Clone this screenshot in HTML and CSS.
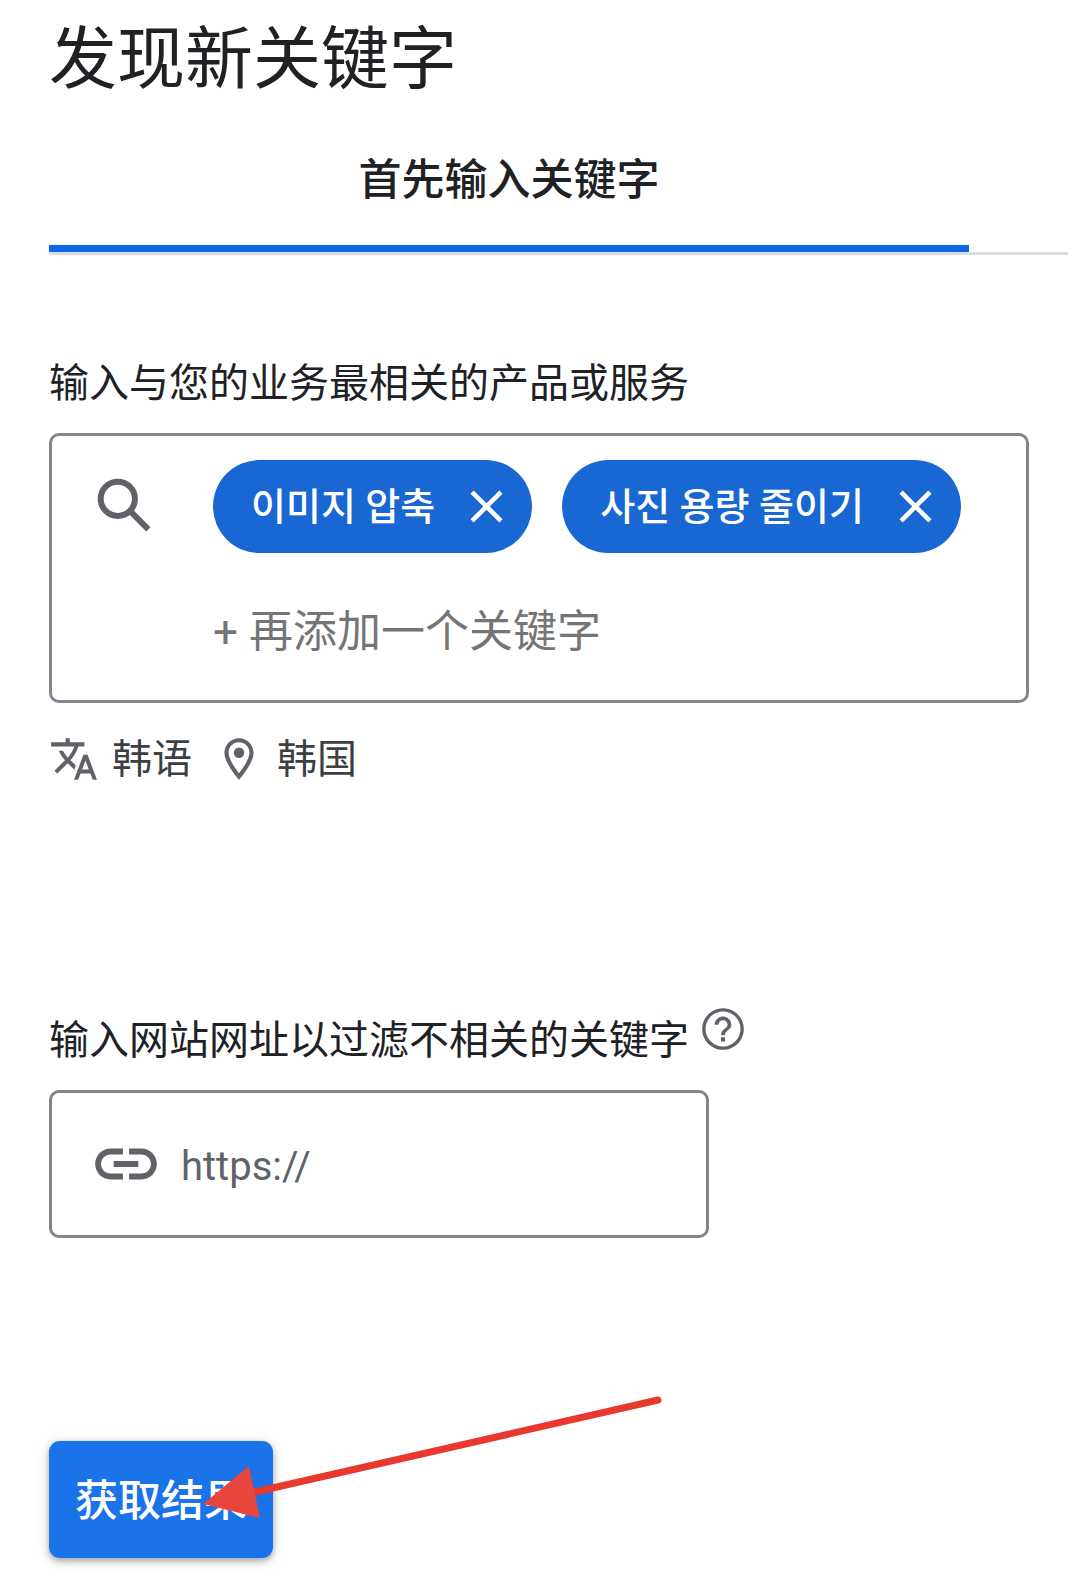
FILE: index.html
```html
<!DOCTYPE html>
<html lang="zh-CN">
<head>
  <meta charset="utf-8">
  <meta name="viewport" content="width=device-width, initial-scale=1">
  <title>发现新关键字</title>
  <link rel="stylesheet" href="styles.css">
</head>
<body>
  <main class="planner">
    <h1 class="title">发现新关键字</h1>

    <div class="tabs" role="tablist">
      <button class="tab" type="button" role="tab" aria-selected="true">首先输入关键字</button>
    </div>

    <form class="form">
      <label class="label" for="keyword">输入与您的业务最相关的产品或服务</label>
      <div class="keywords">
        <svg class="icon-search" viewBox="0 0 24 24" aria-hidden="true"><circle cx="9.6" cy="9.6" r="5.7"/><path d="M13.7 13.7L19.8 19.8"/></svg>
        <div class="entries">
          <div class="chips">
            <span class="chip" lang="ko"><span class="chip-text">이미지 압축</span>
              <button class="remove" type="button" aria-label="移除"><svg viewBox="0 0 24 24" aria-hidden="true"><path d="M19 6.41L17.59 5 12 10.59 6.41 5 5 6.41 10.59 12 5 17.59 6.41 19 12 13.41 17.59 19 19 17.59 13.41 12z"/></svg></button>
            </span>
            <span class="chip" lang="ko"><span class="chip-text">사진 용량 줄이기</span>
              <button class="remove" type="button" aria-label="移除"><svg viewBox="0 0 24 24" aria-hidden="true"><path d="M19 6.41L17.59 5 12 10.59 6.41 5 5 6.41 10.59 12 5 17.59 6.41 19 12 13.41 17.59 19 19 17.59 13.41 12z"/></svg></button>
            </span>
          </div>
          <input class="keyword-input" id="keyword" type="text" placeholder="+ 再添加一个关键字">
        </div>
      </div>

      <div class="targets">
        <span class="target">
          <svg class="icon" viewBox="0 0 24 24" aria-hidden="true"><path d="M12.87 15.07l-2.54-2.51.03-.03c1.74-1.94 2.98-4.17 3.71-6.53H17V4h-7V2H8v2H1v1.99h11.17C11.5 7.92 10.44 9.75 9 11.35 8.07 10.32 7.3 9.19 6.69 8h-2c.73 1.63 1.73 3.17 2.98 4.56l-5.09 5.02L4 19l5-5 3.11 3.11.76-2.04zM18.5 10h-2L12 22h2l1.12-3h4.75L21 22h2l-4.5-12zm-2.62 7l1.62-4.33L19.12 17h-3.24z"/></svg>
          韩语
        </span>
        <span class="target">
          <svg class="icon" viewBox="0 0 24 24" aria-hidden="true"><path d="M12 2C8.13 2 5 5.13 5 9c0 5.25 7 13 7 13s7-7.75 7-13c0-3.87-3.13-7-7-7zM7 9c0-2.76 2.24-5 5-5s5 2.24 5 5c0 2.88-2.88 7.19-5 9.88C9.92 16.21 7 11.85 7 9z"/><circle cx="12" cy="9" r="2.5"/></svg>
          韩国
        </span>
      </div>

      <div class="site-heading">
        <label class="label" for="site">输入网站网址以过滤不相关的关键字</label>
        <button class="help" type="button" aria-label="帮助"><svg class="icon" viewBox="0 0 24 24" aria-hidden="true"><path d="M11 18h2v-2h-2v2zm1-16C6.48 2 2 6.48 2 12s4.48 10 10 10 10-4.48 10-10S17.52 2 12 2zm0 18.4c-4.64 0-8.4-3.76-8.4-8.4S7.36 3.6 12 3.6s8.4 3.76 8.4 8.4-3.76 8.4-8.4 8.4zM12 6c-2.21 0-4 1.79-4 4h1.8c0-1.2 1-2.2 2.2-2.2s2.2 1 2.2 2.2c0 2-3.1 1.75-3.1 5h1.8c0-2.25 3.1-2.5 3.1-5 0-2.21-1.79-4-4-4z"/></svg></button>
      </div>
      <div class="site">
        <svg class="icon-link" viewBox="0 0 24 24" aria-hidden="true"><path d="M3.9 12c0-1.71 1.39-3.1 3.1-3.1h4V7H7c-2.76 0-5 2.24-5 5s2.24 5 5 5h4v-1.9H7c-1.71 0-3.1-1.39-3.1-3.1zM8 13h8v-2H8v2zm9-6h-4v1.9h4c1.71 0 3.1 1.39 3.1 3.1s-1.39 3.1-3.1 3.1h-4V17h4c2.76 0 5-2.24 5-5s-2.24-5-5-5z"/></svg>
        <input class="site-input" id="site" type="text" placeholder="https://">
      </div>

      <div class="actions">
        <button class="submit" type="submit">获取结果</button>
        <svg class="arrow" viewBox="0 0 466 128" aria-hidden="true"><path class="arrow-shaft" d="M54 98L457 6"/><path class="arrow-head" d="M2 110L48 72L59 124Z"/></svg>
      </div>
    </form>
  </main>
</body>
</html>
```
FILE: styles.css
```css
* {
  box-sizing: border-box;
}

body {
  margin: 0;
  background: #fff;
  color: #202124;
  font-family: Roboto, "Noto Sans CJK SC", sans-serif;
}

button,
input {
  margin: 0;
  padding: 0;
  border: 0;
  background: none;
  color: inherit;
  font: inherit;
}

svg {
  display: block;
  flex: none;
  fill: #5f6368;
}

.planner {
  padding: 20px 12px 16px 49px;
}

.title {
  margin: 0;
  font-size: 68px;
  font-weight: 400;
  line-height: 80px;
}

.tabs {
  display: flex;
  margin-top: 28px;
  padding-right: 99px;
  border-bottom: 3px solid #dadce0;
}

.tab {
  flex: 1;
  padding: 27px 0 40px;
  border-bottom: 7px solid #0b66e8;
  font-size: 43px;
  font-weight: 500;
  line-height: 50px;
}

.form {
  margin: 105px 39px 0 0;
}

.label {
  display: block;
  font-size: 40px;
  line-height: 48px;
}

.keywords {
  display: flex;
  gap: 52px;
  margin-top: 25px;
  padding: 24px 0 38px 37px;
  border: 3px solid #80868b;
  border-radius: 10px;
}

.icon-search {
  width: 72px;
  height: 72px;
  margin-top: 10px;
  fill: none;
  stroke: #5f6368;
  stroke-width: 2;
}

.entries {
  flex: 1;
  min-width: 0;
}

.chips {
  display: flex;
  flex-wrap: wrap;
  gap: 30px;
}

.chip {
  display: flex;
  align-items: center;
  gap: 24px;
  height: 93px;
  padding: 0 18px 0 38px;
  border-radius: 47px;
  background: #1967d2;
  color: #fff;
  font-family: Roboto, "Noto Sans CJK KR", sans-serif;
  font-size: 38px;
  font-weight: 500;
  white-space: nowrap;
}

.chip-text {
  padding-bottom: 6px;
}

.remove svg {
  width: 55px;
  height: 55px;
  fill: #fff;
}

.keyword-input {
  display: block;
  width: 100%;
  height: 60px;
  margin-top: 49px;
  font-size: 44px;
}

.keyword-input::placeholder {
  color: #757575;
  opacity: 1;
}

.targets {
  display: flex;
  gap: 22px;
  margin-top: 31px;
}

.target {
  display: flex;
  gap: 13px;
  color: #3c4043;
  font-size: 40px;
  line-height: 52px;
}

.icon {
  width: 50px;
  height: 50px;
}

.site-heading {
  display: flex;
  align-items: flex-start;
  gap: 9px;
  margin-top: 218px;
}

.site-heading .label {
  padding-top: 13px;
}

.site {
  display: flex;
  align-items: center;
  gap: 18px;
  max-width: 660px;
  height: 148px;
  margin-top: 25px;
  padding: 0 37px;
  border: 3px solid #80868b;
  border-radius: 10px;
}

.icon-link {
  width: 74px;
  height: 74px;
}

.site-input {
  flex: 1;
  min-width: 0;
  padding-top: 4px;
  font-size: 40px;
}

.site-input::placeholder {
  color: #5f6368;
  opacity: 1;
}

.actions {
  position: relative;
  width: fit-content;
  margin-top: 203px;
}

.submit {
  display: block;
  height: 117px;
  padding: 0 26px 6px;
  border-radius: 11px;
  background: #1a73e8;
  box-shadow: 0 3px 6px rgba(60, 64, 67, 0.4), 0 2px 14px rgba(60, 64, 67, 0.15);
  color: #fff;
  font-size: 43px;
  font-weight: 500;
}

/* The pointer drawn across the submit button */
.arrow {
  position: absolute;
  top: -47px;
  left: 152px;
  width: 466px;
  height: 128px;
  pointer-events: none;
}

.arrow-shaft {
  fill: none;
  stroke: #e8392f;
  stroke-width: 7;
  stroke-linecap: round;
}

.arrow-head {
  fill: #e8453c;
}
```
